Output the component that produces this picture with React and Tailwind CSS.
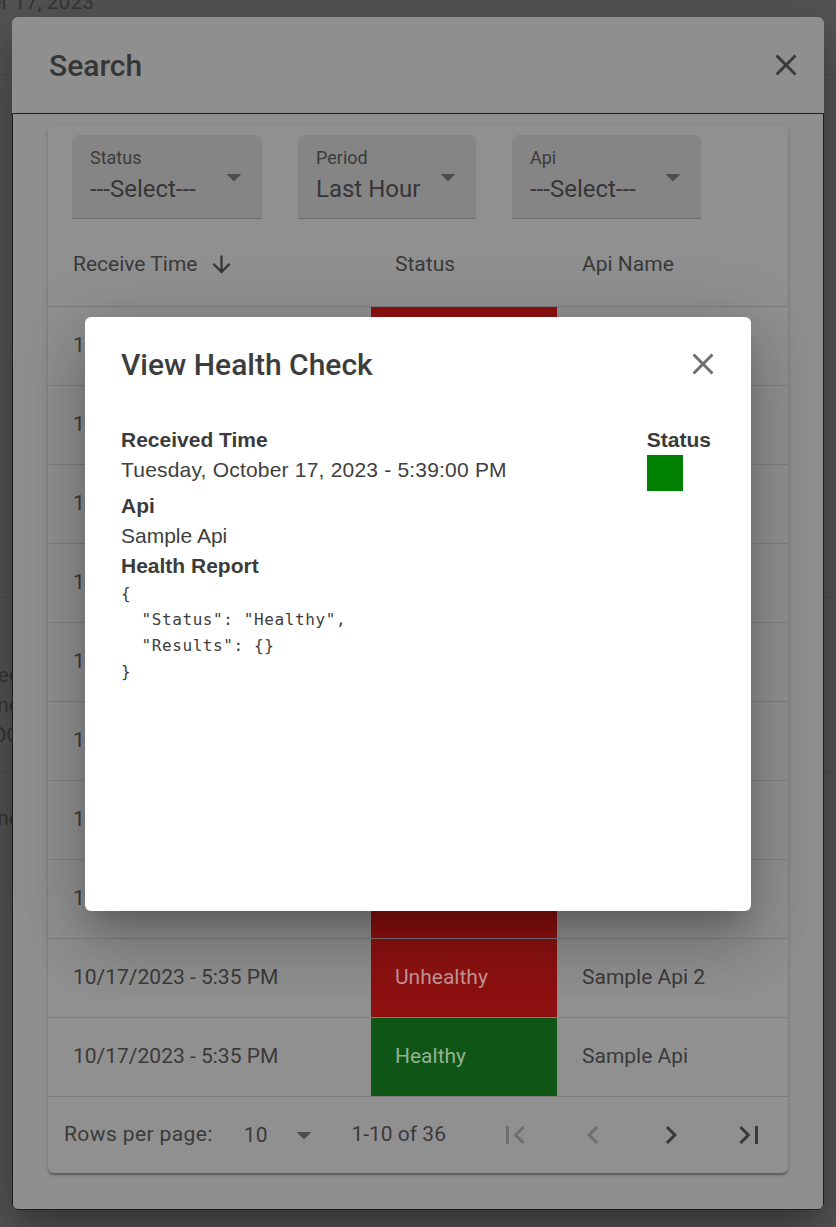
import React from "react";

const rows = [
  { time: "10/17/2023 - 5:39 PM", status: "Unhealthy", api: "Sample Api 2" },
  { time: "10/17/2023 - 5:39 PM", status: "Healthy", api: "Sample Api" },
  { time: "10/17/2023 - 5:38 PM", status: "Unhealthy", api: "Sample Api 2" },
  { time: "10/17/2023 - 5:38 PM", status: "Healthy", api: "Sample Api" },
  { time: "10/17/2023 - 5:37 PM", status: "Unhealthy", api: "Sample Api 2" },
  { time: "10/17/2023 - 5:37 PM", status: "Healthy", api: "Sample Api" },
  { time: "10/17/2023 - 5:36 PM", status: "Healthy", api: "Sample Api" },
  { time: "10/17/2023 - 5:36 PM", status: "Unhealthy", api: "Sample Api 2" },
  { time: "10/17/2023 - 5:35 PM", status: "Unhealthy", api: "Sample Api 2" },
  { time: "10/17/2023 - 5:35 PM", status: "Healthy", api: "Sample Api" },
];

function Icon({ d, className }) {
  return (
    <svg viewBox="0 0 24 24" className={className} fill="currentColor">
      <path d={d} />
    </svg>
  );
}

const CLOSE =
  "M19 6.41L17.59 5 12 10.59 6.41 5 5 6.41 10.59 12 5 17.59 6.41 19 12 13.41 17.59 19 19 17.59 13.41 12z";
const DROP = "M7 10l5 5 5-5z";

function Select({ label, value, width }) {
  return (
    <div className={`flex justify-between h-[84px] ${width} bg-[#858585] rounded-t-[6px] border-b border-[#6e6e6e] px-[18px] pt-[11px]`}>
      <div className="flex flex-col">
        <span className="text-[18px] leading-[24px] text-[#3c3c3c]">{label}</span>
        <span className="mt-[4px] text-[24px] leading-[30px] text-[#363636] whitespace-nowrap">{value}</span>
      </div>
      <Icon d={DROP} className="w-[36px] h-[36px] mt-[13px] -mr-[8px] text-[#4e4e4e] shrink-0" />
    </div>
  );
}

function Row({ row }) {
  const healthy = row.status === "Healthy";
  return (
    <div className="flex h-[79px] border-b border-[#7e7e7e] text-[21px] text-[#3a3a3a]">
      <div className="w-[323px] flex items-center pl-[25px]">{row.time}</div>
      <div
        className={`w-[186px] flex items-center pl-[24px] ${
          healthy ? "bg-[#0f5515] text-[#93b293]" : "bg-[#8e1111] text-[#c49797]"
        }`}
      >
        {row.status}
      </div>
      <div className="flex-1 flex items-center pl-[25px]">{row.api}</div>
    </div>
  );
}

function EdgeText({ children }) {
  return (
    <div className="w-[20px] flex justify-end overflow-hidden">
      <span className="whitespace-nowrap">{children}</span>
    </div>
  );
}

export default function App() {
  return (
    <div className="relative w-[836px] h-[1227px] overflow-hidden bg-[#545454] font-['Roboto',sans-serif]">
      {/* page behind the dialogs */}
      <div className="flex flex-col text-[21px] text-[#363636]">
        <div className="h-[75px] border-b border-[#4d4d4d] overflow-hidden">
          <div className="w-[94px] flex justify-end -mt-[13px]">
            <span className="whitespace-nowrap">Tuesday, October 17, 2023</span>
          </div>
        </div>
        <div className="h-[523px] border-b border-[#4d4d4d]" />
        <div className="h-[175px] border-b border-[#4d4d4d] flex flex-col pt-[62px] leading-[30px]">
          <EdgeText>Spec</EdgeText>
          <EdgeText>Line</EdgeText>
          <EdgeText>OC</EdgeText>
        </div>
        <div className="flex flex-col pt-[30px]">
          <EdgeText>Line</EdgeText>
          <div className="flex flex-col gap-[70px] mt-[30px] leading-[25px]">
            <EdgeText>-</EdgeText>
            <EdgeText>-</EdgeText>
            <EdgeText>-</EdgeText>
            <EdgeText>-</EdgeText>
          </div>
        </div>
      </div>

      {/* search dialog */}
      <div className="absolute left-[12px] top-[17px] w-[812px] h-[1193px] flex flex-col bg-[#8f8f8f] rounded-[6px] shadow-[0_16px_22px_-10px_rgba(0,0,0,0.2),0_36px_57px_4px_rgba(0,0,0,0.14),0_13px_69px_12px_rgba(0,0,0,0.12)]">
        <div className="h-[96px] flex items-center justify-between pl-[37px] pr-[20px]">
          <span className="text-[30px] font-medium text-[#363636]">Search</span>
          <Icon d={CLOSE} className="w-[36px] h-[36px] text-[#3a3a3a]" />
        </div>
        <div className="flex-1 border border-[#1e1e1e] rounded-b-[6px] pl-[35px] pr-[35px] pt-[11px]">
          <div className="h-[1048px] flex flex-col bg-[#909090] rounded-[6px] shadow-[0_3px_2px_-1px_rgba(0,0,0,0.2),0_2px_2px_0_rgba(0,0,0,0.14),0_2px_5px_0_rgba(0,0,0,0.12)]">
            <div className="flex gap-[36px] px-[24px] pt-[10px]">
              <Select label="Status" value="---Select---" width="w-[190px]" />
              <Select label="Period" value="Last Hour" width="w-[178px]" />
              <Select label="Api" value="---Select---" width="w-[189px]" />
            </div>
            <div className="flex h-[88px] pt-[4px] border-b border-[#7e7e7e] text-[21px] text-[#3a3a3a]">
              <div className="w-[323px] flex items-center pl-[25px]">
                Receive Time
                <Icon
                  d="M20 12l-1.41-1.41L13 16.17V4h-2v12.17l-5.58-5.59L4 12l8 8 8-8z"
                  className="w-[27px] h-[27px] ml-[11px] text-[#363636]"
                />
              </div>
              <div className="w-[186px] flex items-center pl-[24px]">Status</div>
              <div className="flex-1 flex items-center pl-[25px]">Api Name</div>
            </div>
            {rows.map((row, i) => (
              <Row key={i} row={row} />
            ))}
            <div className="flex-1 flex items-center pl-[16px] text-[21px] text-[#3a3a3a] whitespace-nowrap">
              <span className="shrink-0 tracking-[0.4px]">Rows per page:</span>
              <span className="shrink-0 ml-[31px] mt-[2px]">10</span>
              <Icon d={DROP} className="shrink-0 w-[36px] h-[36px] ml-[19px] text-[#4e4e4e]" />
              <span className="shrink-0 ml-[29px]">1-10 of 36</span>
              <div className="flex shrink-0 ml-[30px]">
                <Icon
                  d="M18.41 16.59L13.82 12l4.59-4.59L17 6l-6 6 6 6zM6 6h2v12H6z"
                  className="w-[36px] h-[36px] mx-[21px] text-[#6f6f6f]"
                />
                <Icon
                  d="M15.41 7.41 14 6l-6 6 6 6 1.41-1.41L10.83 12z"
                  className="w-[36px] h-[36px] mx-[21px] text-[#6f6f6f]"
                />
                <Icon
                  d="M8.59 16.59 13.17 12 8.59 7.41 10 6l6 6-6 6z"
                  className="w-[36px] h-[36px] mx-[21px] text-[#3a3a3a]"
                />
                <Icon
                  d="M5.59 7.41L10.18 12l-4.59 4.59L7 18l6-6-6-6zM16 6h2v12h-2z"
                  className="w-[36px] h-[36px] ml-[21px] text-[#3a3a3a]"
                />
              </div>
            </div>
          </div>
        </div>
      </div>

      {/* health check modal */}
      <div className="absolute left-[85px] top-[317px] w-[666px] h-[594px] bg-white rounded-[6px] shadow-[0_16px_22px_-10px_rgba(0,0,0,0.2),0_36px_57px_4px_rgba(0,0,0,0.14),0_13px_69px_12px_rgba(0,0,0,0.12)]">
        <div className="flex items-center justify-between h-[48px] mt-[23px] pl-[36px] pr-[30px]">
          <span className="text-[30px] font-medium text-[#3d3d3d]">View Health Check</span>
          <Icon d={CLOSE} className="w-[36px] h-[36px] text-[#6f6f6f]" />
        </div>
        <div className="flex justify-between mt-[37px] pl-[36px] pr-[40px] font-['Liberation_Sans',Arial,sans-serif] text-[21px] leading-[30px] text-[#404040]">
          <div className="flex flex-col">
            <span className="font-bold text-[#3b3b3b]">Received Time</span>
            <span className="tracking-[0.2px]">Tuesday, October 17, 2023 - 5:39:00 PM</span>
            <span className="mt-[6px] font-bold text-[#3b3b3b]">Api</span>
            <span>Sample Api</span>
            <span className="font-bold text-[#3b3b3b]">Health Report</span>
            <pre className="font-['DejaVu_Sans_Mono',monospace] text-[16px] leading-[26px] tracking-[0.6px] text-[#3d3d3d]">
{`{
  "Status": "Healthy",
  "Results": {}
}`}
            </pre>
          </div>
          <div className="flex flex-col">
            <span className="font-bold text-[#3b3b3b]">Status</span>
            <div className="w-[36px] h-[36px] bg-[#008000]" />
          </div>
        </div>
      </div>
    </div>
  );
}
